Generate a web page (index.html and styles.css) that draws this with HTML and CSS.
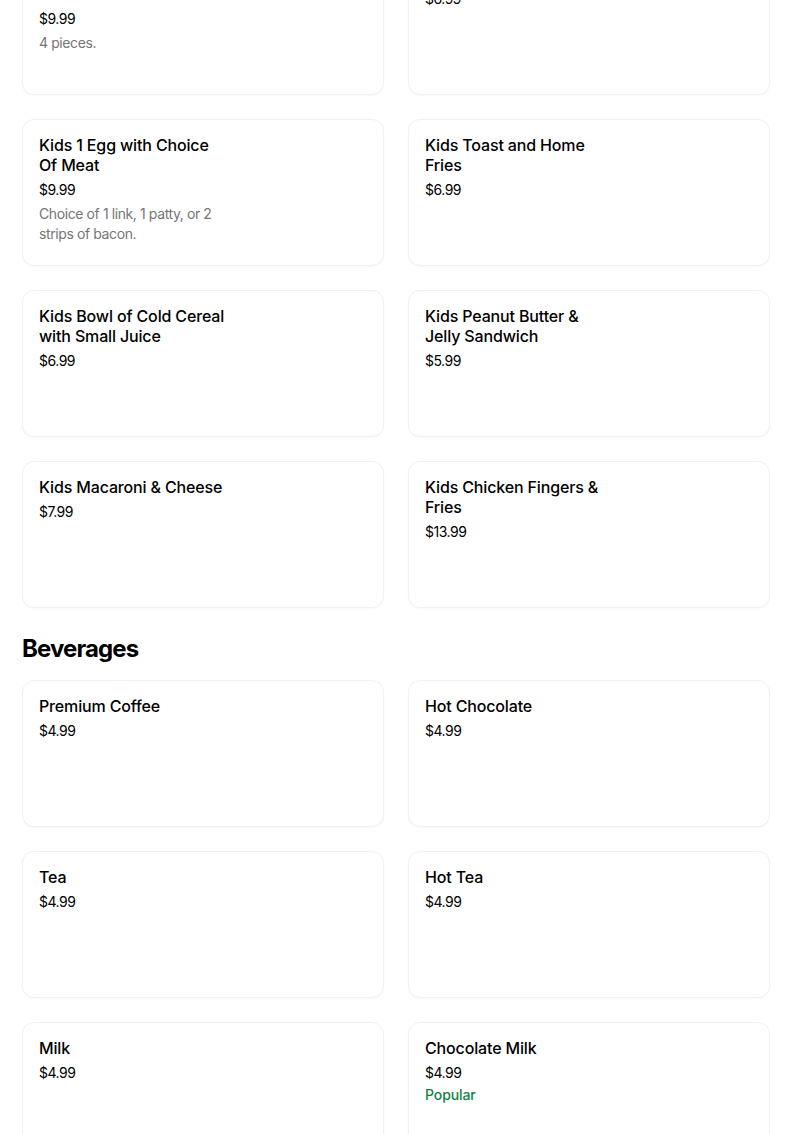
FILE: index.html
```html
<!DOCTYPE html>
<html>
<head>
<meta charset="utf-8">
<link rel="stylesheet" href="styles.css">
</head>
<body>
<div class="page">
  <section class="section">
    <div class="grid">
      <div class="card"><div class="info"><div class="title">Kids Chocolate Chip Pancakes</div><div class="price">$9.99</div><div class="desc">4 pieces.</div></div></div>
      <div class="card"><div class="info"><div class="title">Kids Pancake</div><div class="price">$6.99</div></div></div>
      <div class="card"><div class="info"><div class="title">Kids 1 Egg with Choice Of Meat</div><div class="price">$9.99</div><div class="desc">Choice of 1 link, 1 patty, or 2 strips of bacon.</div></div></div>
      <div class="card"><div class="info"><div class="title">Kids Toast and Home Fries</div><div class="price">$6.99</div></div></div>
      <div class="card"><div class="info"><div class="title">Kids Bowl of Cold Cereal with Small Juice</div><div class="price">$6.99</div></div></div>
      <div class="card"><div class="info"><div class="title">Kids Peanut Butter &amp; Jelly Sandwich</div><div class="price">$5.99</div></div></div>
      <div class="card"><div class="info"><div class="title">Kids Macaroni &amp; Cheese</div><div class="price">$7.99</div></div></div>
      <div class="card"><div class="info"><div class="title">Kids Chicken Fingers &amp; Fries</div><div class="price">$13.99</div></div></div>
    </div>
  </section>
  <section class="section">
    <h2 class="heading">Beverages</h2>
    <div class="grid">
      <div class="card"><div class="info"><div class="title">Premium Coffee</div><div class="price">$4.99</div></div></div>
      <div class="card"><div class="info"><div class="title">Hot Chocolate</div><div class="price">$4.99</div></div></div>
      <div class="card"><div class="info"><div class="title">Tea</div><div class="price">$4.99</div></div></div>
      <div class="card"><div class="info"><div class="title">Hot Tea</div><div class="price">$4.99</div></div></div>
      <div class="card"><div class="info"><div class="title">Milk</div><div class="price">$4.99</div></div></div>
      <div class="card"><div class="info"><div class="title">Chocolate Milk</div><div class="price">$4.99</div><div class="badge">Popular</div></div></div>
    </div>
  </section>
</div>
</body>
</html>
```

FILE: styles.css
```css
* { box-sizing: border-box; }
html, body { margin: 0; padding: 0; background: #fff; overflow: hidden; }
body { font-family: Inter, "Noto Sans", sans-serif; color: #000; }
.page { padding: 0 34px 0 22px; margin-top: -52px; }
.grid { display: grid; grid-template-columns: 362px 362px; column-gap: 24px; row-gap: 24px; }
.card { height: 147px; border: 1px solid #f1f1f1; border-radius: 12px; padding: 15px 16px; background: #fff; box-shadow: 0 1px 2px rgba(0,0,0,0.03); }
.info { max-width: 186px; }
.title { font-size: 16px; font-weight: 500; line-height: 20px; letter-spacing: -0.15px; }
.price { font-size: 14px; line-height: 20px; margin-top: 5px; color: #000; letter-spacing: -0.5px; }
.desc { font-size: 14px; line-height: 20px; margin-top: 4px; color: #767676; letter-spacing: -0.4px; }
.badge { font-size: 14px; line-height: 20px; margin-top: 2px; color: #0e8345; font-weight: 500; letter-spacing: -0.1px; }
.heading { margin: 25px 0 15px; font-size: 24px; line-height: 32px; font-weight: 700; letter-spacing: -0.9px; }
```
